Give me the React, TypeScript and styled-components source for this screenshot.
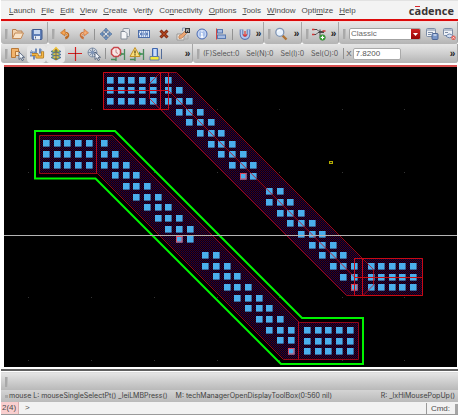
import React from "react";
import styled, { createGlobalStyle } from "styled-components";

const GlobalStyle = createGlobalStyle`
  * { box-sizing: border-box; }
  body {
    margin: 0;
    background: #fff;
    color: #4c4c4c;
    font-family: "Liberation Sans", Arial, sans-serif;
    font-size: 8px;
    line-height: 10px;
  }
  button, input, select { font: inherit; color: inherit; }
`;

const Window = styled.div`
  display: flex;
  flex-direction: column;
  padding-left: 1px;
  min-height: 100vh;
`;

const MenuBar = styled.nav`
  display: flex;
  align-items: center;
  gap: 6px;
  height: 19px;
  padding: 1px 4px 0 8px;
  background: #f3f3f3;
  border-top: 1px solid #e2e2e2;
`;

const MenuItem = styled.button`
  padding: 0;
  border: 0;
  background: none;
  white-space: nowrap;
`;

const Brand = styled.span`
  margin-left: auto;
  color: #3b3434;
  font: 700 11px/11px "Open Sans", sans-serif;
`;

const Accent = styled.span`
  position: relative;
  &::before {
    content: "";
    position: absolute;
    left: 1px;
    top: 3px;
    width: 5px;
    height: 1px;
    background: #d8232a;
  }
`;

const RedRule = styled.div`
  height: 3px;
  background: #dc0a0a;
  border-bottom: 1px solid #f4dcdc;
`;

const ToolRow = styled.div<{ $h: number; $top?: number }>`
  display: flex;
  height: ${(p) => p.$h}px;
  > div { padding-top: ${(p) => p.$top ?? 0}px; }
`;

const Group = styled.div<{ $grow?: boolean; $w?: number }>`
  display: flex;
  align-items: center;
  flex: ${(p) => (p.$grow ? "1 1 0" : "none")};
  width: ${(p) => (p.$w ? `${p.$w}px` : "auto")};
  min-width: 0;
  padding-left: 4px;
  overflow: hidden;
  border-right: 1px solid #a6a6a6;
  border-radius: 0 0 3px 3px;
  background: linear-gradient(#e6e6e6, #cfcfcf 50%, #b4b4b4);
`;

const Handle = styled.span`
  flex: none;
  width: 3px;
  height: 10px;
  background: #a9a9a9;
  border-right: 1px solid #bcbcbc;
`;

const Divider = styled.span<{ $before?: number; $after?: number }>`
  flex: none;
  width: 1px;
  height: 11px;
  margin: 0 ${(p) => p.$after ?? 1}px 0 ${(p) => p.$before ?? 1}px;
  background: #929292;
`;

const IconButton = styled.button<{ $on?: boolean; $w?: number }>`
  display: flex;
  flex: none;
  align-items: center;
  justify-content: center;
  width: ${(p) => p.$w ?? 19}px;
  height: 18px;
  padding: 0;
  border: 0;
  border-radius: 4px;
  background: ${(p) => (p.$on ? "#e6e6e6" : "none")};
  svg { display: block; flex: none; }
`;

const More = styled.button`
  flex: none;
  margin-left: auto;
  width: 9px;
  padding: 0;
  border: 0;
  background: none;
  color: #1c1c1c;
  font: 700 10px/10px "Liberation Sans", sans-serif;
`;

const Combo = styled.label`
  display: flex;
  flex: none;
  width: 72px;
  height: 12px;
  margin: 0 1px 0 3px;
  border-radius: 2px;
  border: 1px solid #a3a3a3;
  background: #fff;
  overflow: hidden;
`;

const ComboSelect = styled.select`
  appearance: none;
  flex: 1;
  min-width: 0;
  padding: 0 1px;
  border: 0;
  background: none;
  color: #6a6a6a;
`;

const ComboArrow = styled.span`
  display: flex;
  align-items: center;
  justify-content: center;
  width: 9px;
  background: linear-gradient(#d02020, #960404);
`;

const Readout = styled.span`
  flex: none;
  margin: 0 0 0 3px;
  color: #555;
  font-family: Inter, sans-serif;
  font-size: 7px;
  & + & { margin-left: 7px; }
`;

const Coord = styled.label`
  display: flex;
  flex: none;
  align-items: center;
  gap: 1px;
  color: #555;
`;

const CoordInput = styled.input`
  width: 48px;
  height: 12px;
  padding: 0 2px;
  border: 1px solid #aaa;
  border-radius: 2px;
  background: #fff;
`;

const Canvas = styled.main`
  margin: 2px 1px 0 3px;
  border-top: 2px solid #d85050;
  background: #000;
  overflow: hidden;
  svg { display: block; }
`;

const Splitter = styled.div`
  height: 4px;
  margin-top: 2px;
  border-top: 2px solid #5f5f5f;
  border-bottom: 1px solid #ddd;
`;

const Dock = styled.div`
  display: flex;
  align-items: center;
  height: 17px;
  padding-left: 4px;
  background: linear-gradient(#e4e4e4, #b9b9b9);
`;

const Hints = styled.div`
  display: flex;
  align-items: center;
  height: 12px;
  padding: 0 3px 0 4px;
  background: linear-gradient(#d4d4d4, #bababa);
  color: #404040;
  font-family: Inter, sans-serif;
  font-size: 7px;
  white-space: nowrap;
`;

const Grip = styled.span`
  width: 3px;
  height: 3px;
  margin-right: 1px;
  background: #aaa;
`;

const Hint = styled.span<{ $right?: boolean }>`
  margin-right: 8px;
  ${(p) => p.$right && "margin: 0 0 0 auto;"}
`;

const Prompt = styled.form`
  display: flex;
  align-items: stretch;
  height: 13px;
  background: #f2f2f2;
  border-bottom: 1px solid #9a9a9a;
  line-height: 12px;
`;

const Count = styled.span`
  width: 18px;
  padding-left: 1px;
  background: #f9cfcf;
  border-right: 1px solid #d9b0b0;
`;

const PromptLabel = styled.label`
  display: flex;
  flex: 1;
  padding-left: 6px;
  gap: 4px;
`;

const PromptInput = styled.input`
  flex: 1;
  min-width: 0;
  padding: 0;
  border: 0;
  background: none;
`;

const Cmd = styled.span`
  margin: 1px 0 0;
  padding: 0 5px 0 4px;
  border-left: 1px solid #999;
  line-height: 11px;
`;

const Corner = styled.span`
  width: 3px;
  margin-top: 2px;
  background: #a5a5a5;
`;

const Glyph = ({ children }: { children: React.ReactNode }) => (
  <svg width="16" height="16" viewBox="0 0 16 16" fill="none" aria-hidden="true">
    {children}
  </svg>
);

const Cursor = ({ x, y }: { x: number; y: number }) => (
  <path
    transform={`translate(${x} ${y})`}
    d="M0 0v7.5l1.8-1.6 1.4 2.8 1.3-.7-1.4-2.7H5.500z"
    fill="#eef2f8"
    stroke="#43546e"
    strokeWidth=".8"
  />
);

const icons: Record<string, React.ReactNode> = {
  open: (
    <>
      <path d="M2.500 12.500v-9h3.500l1 1.500h5v2" fill="#f3d3ae" stroke="#b98252" />
      <path d="M2.500 12.500 5 7h8.500l-2.500 5.500z" fill="#f9e3c8" stroke="#c48b58" />
    </>
  ),
  save: (
    <>
      <rect x="3" y="3.500" width="10" height="10" rx="1" fill="#5f7fb8" stroke="#3e588c" />
      <rect x="5" y="4" width="6" height="4" fill="#c9d8ef" />
      <rect x="5" y="10" width="6" height="3.500" fill="#e9edf5" />
      <path d="M6.500 10.500v2" stroke="#56647e" />
    </>
  ),
  undo: (
    <>
      <path d="M5.500 7h3.200q2.800.4 2.200 3-.5 1.700-2.600 2.200" stroke="#bb6a24" strokeWidth="2.600" />
      <path d="M3.500 6.800 8 3v7z" fill="#ef9a48" stroke="#bb6a24" strokeWidth=".6" />
      <path d="M6 7h2.700q2.100.3 1.700 2.600" stroke="#f8b66d" />
    </>
  ),
  redo: (
    <>
      <path d="M10.500 7H7.300q-2.800.4-2.200 3 .5 1.700 2.600 2.200" stroke="#c9713b" strokeWidth="2.600" />
      <path d="M12.500 6.800 8 3v7z" fill="#f1a266" stroke="#c9713b" strokeWidth=".6" />
      <path d="M10 7H7.300q-2.100.3-1.700 2.600" stroke="#f7bf90" />
    </>
  ),
  move: (
    <>
      <path d="M8 4v8M4 8h8" stroke="#5f7da6" strokeWidth="1.600" />
      <path d="m8 2 2.500 3h-5zM8 14l2.500-3h-5zM2 8l3-2.500v5zM14 8l-3-2.500v5z" fill="#6f96c6" stroke="#4b6890" strokeWidth=".6" />
      <rect x="7" y="7" width="2" height="2" fill="#d8e3f0" />
    </>
  ),
  copy: (
    <>
      <rect x="6" y="2.500" width="6.500" height="8" rx="1" fill="#e6e9ed" stroke="#8b949f" />
      <path d="M4 5.500h4l2 2v5.500H4z" fill="#f4f5f7" stroke="#858e99" />
    </>
  ),
  stretch: (
    <>
      <rect x="2.500" y="4.500" width="11" height="7" fill="#dce7f8" stroke="#4c6da8" />
      <path d="M3 6h10M3 10h10" stroke="#4c6da8" strokeDasharray="1 1" />
      <path d="M4 8h8M6 6.500 4.500 8 6 9.500M10 6.500 11.500 8 10 9.500" stroke="#3c62a8" />
    </>
  ),
  remove: (
    <>
      <path d="m4.500 4.500 7 7M11.500 4.500l-7 7" stroke="#7b2712" strokeWidth="3" />
      <path d="m4.800 4.800 6.400 6.400M11.200 4.800l-6.400 6.400" stroke="#b5481f" strokeWidth="1.200" />
    </>
  ),
  properties: (
    <>
      <path d="M2 8h7v6H2z" fill="#f1ebe4" stroke="#999" />
      <path d="M4 12.500q-1-3.500 2.500-4L10 5l2 2-3.500 3.500q-1.500 2.500-4.500 2z" fill="#eaa675" stroke="#b87344" strokeWidth=".7" />
      <path d="M7.500 5V2h3" stroke="#8ca0c0" />
      <rect x="10" y="2" width="5" height="5" fill="#373737" />
      <path d="M11.500 6V3.500h2v1h-1L14 6" stroke="#dedede" strokeWidth=".7" />
      <path d="M10 13h3V9" stroke="#aaa" />
    </>
  ),
  info: (
    <>
      <circle cx="8" cy="8" r="5" fill="#a9c0eb" stroke="#4d6db4" />
      <circle cx="8" cy="8" r="3.800" stroke="#dbe5f8" strokeWidth=".7" />
      <path d="M8 7v4M7 7.500h1M6.800 11h2.500M8 4.500v1.300" stroke="#fff" strokeWidth="1.300" />
    </>
  ),
  align: (
    <>
      <path d="M3.500 2.500v11" stroke="#d24545" />
      <rect x="4.500" y="3.500" width="5" height="3.500" fill="#a7bce2" stroke="#5878b0" />
      <rect x="4.500" y="9" width="8" height="3.500" fill="#a7bce2" stroke="#5878b0" />
    </>
  ),
  magnet: (
    <>
      <path d="M4.500 3.500v5Q5 12 8 12.200q3-.2 3.500-3.700v-5" stroke="#5874b2" strokeWidth="3.600" />
      <path d="M4.500 3.500v5Q5 11.700 8 11.800q3-.1 3.500-3.300v-5" stroke="#b5c9ef" strokeWidth="1.700" />
      <path d="M8 5v5M6 8.500l2 1.800 2-1.800" stroke="#df3b3b" strokeWidth="1.200" />
    </>
  ),
  zoom: (
    <>
      <path d="m9.500 9.500 4 4" stroke="#b07333" strokeWidth="2.400" />
      <circle cx="6.800" cy="6.300" r="4" fill="#e8f2fd" stroke="#8095b4" strokeWidth="1.300" />
      <path d="M4.500 6q.5-2 2.500-2" stroke="#fff" />
    </>
  ),
  netlist: (
    <>
      <path d="M2 3.500h4l2 2h5M2 8.500h3l2-2h6M9 3.500v7" stroke="#494949" />
      <path d="M1 3.500h2.500M1 8.500h2.500M11.500 5h3" stroke="#d33939" strokeWidth="1.600" />
      <circle cx="11.500" cy="11.500" r="2.800" fill="#40a63d" stroke="#267d27" strokeWidth=".6" />
      <path d="M9.800 11.500h3.400M11.500 9.800v3.400" stroke="#fff" strokeWidth="1.100" />
    </>
  ),
  saveView: (
    <>
      <rect x="2.500" y="2.500" width="9" height="8" rx="1" fill="#eef1f6" stroke="#7d8da6" />
      <path d="M3 4h8M4 6.500h5M4 8.500h3" stroke="#7d8da6" />
      <rect x="8" y="7.500" width="6" height="6" rx="1" fill="#7996c8" stroke="#4d6696" />
      <path d="M9.500 9h3" stroke="#fff" />
    </>
  ),
  dropView: (
    <>
      <rect x="1.500" y="2.500" width="9" height="7" rx="1" fill="#eef1f6" stroke="#7d8da6" />
      <path d="M2 4h8M3 6.500h3" stroke="#7d8da6" />
      <path d="M4 10q3.500-4 7 0-3.500 3.500-7 0z" fill="#d5e1f3" stroke="#6b82a8" />
      <circle cx="11.500" cy="11.700" r="2.200" fill="#e05a50" />
      <path d="m10.500 10.700 2 2m0-2-2 2" stroke="#fff" strokeWidth=".7" />
    </>
  ),
  select: (
    <>
      <path d="M1.500 2.500h7v3h-3v6h-4z" fill="#f2b46c" stroke="#b97939" />
      <path d="M5.500 5.500h4v4h-4z" fill="#fde2bd" stroke="#b97939" />
      <Cursor x={9} y={6} />
    </>
  ),
  route: (
    <>
      <path d="M1 6.500h6v-4M1 9.500h4v4M11 2.500v4h4" stroke="#718bb8" strokeWidth="2" />
      <path d="m2 4 4 4M12 3l2 4" stroke="#8ba5ca" />
      <path d="M3 8.500h5V11h5.500V5.500" stroke="#aa741f" strokeWidth="3.200" strokeLinejoin="round" />
      <path d="M3 8.500h5V11h5.500V5.500" stroke="#f3b748" strokeWidth="1.700" strokeLinejoin="round" />
    </>
  ),
  layers: (
    <>
      <path d="M3 5.500 8 3l5 2.500L8 8zM3 8.500 8 6l5 2.500L8 11zM3 11.500 8 9l5 2.500L8 14z" fill="#8cad52" stroke="#42689a" strokeWidth=".8" />
      <path d="M8 2v12" stroke="#9b7b20" strokeWidth="2.200" />
      <path d="m5 5 3-3.500L11 5M5.500 8h5M5.500 11h5" stroke="#efc440" strokeWidth="1.300" />
      <path d="M8 4v9" stroke="#466ca0" strokeWidth=".8" />
    </>
  ),
  cross: (
    <>
      <path d="M8.500 1v14M1 7.500h14" stroke="#d42020" strokeWidth="1.200" />
      <path d="M8 7h1v1H8z" fill="#333" />
    </>
  ),
  probe: (
    <>
      <circle cx="6.500" cy="6.500" r="4.500" fill="#ccd3dd" stroke="#8090a6" />
      <path d="M2 6.500h9M6.500 2v9M3.500 3.500l6 6M9.500 3.500l-6 6" stroke="#71839b" strokeWidth=".8" />
      <circle cx="6.500" cy="6.500" r="2" fill="#8196b7" />
      <Cursor x={9} y={6} />
    </>
  ),
  stop: (
    <>
      <path d="M6 11v4M1 13.500h5M9 8h5M14.500 3v11" stroke="#4a8a5b" strokeWidth="1.300" />
      <path d="M10 5.500v5L13 8z" fill="#3d9a57" />
      <path d="M4 1.500h4L10.500 4v4L8 10.500H4L1.500 8V4z" fill="#f8e7e7" stroke="#c7474b" strokeWidth="1.500" />
      <path d="M6 3.500v3l2 1" stroke="#b76b6b" strokeWidth=".8" />
    </>
  ),
  warn: (
    <>
      <path d="M6 11v4M1 13.500h5M9 8h5M14.500 3v11" stroke="#4a8a5b" strokeWidth="1.300" />
      <path d="M10 5.500v5L13 8z" fill="#3d9a57" />
      <path d="m6 1.500 5 9H1z" fill="#f8df79" stroke="#c39127" strokeLinejoin="round" />
      <path d="M6 4.500v3M6 8.300v1.200" stroke="#5a4312" strokeWidth="1.300" />
    </>
  ),
  highlight: (
    <>
      <path d="M4.500 2.500h5v8h-5z" fill="#9dbcf0" stroke="#4066ac" />
      <path d="M7 3v7" stroke="#fff" />
      <path d="M2 10.500h9V14H2z" fill="#f5e83c" stroke="#4f6fa8" strokeWidth=".8" />
      <path d="M13.500 3v10" stroke="#536c99" />
    </>
  ),
};

const Tool = ({ name, label, on, w }: { name: string; label: string; on?: boolean; w?: number }) => (
  <IconButton type="button" aria-label={label} aria-pressed={on} $on={on} $w={w}>
    <Glyph>{icons[name]}</Glyph>
  </IconButton>
);

const menus: [string, number][] = [
  ["Launch", 0], ["File", 0], ["Edit", 0], ["View", 0], ["Create", 0], ["Verify", 4],
  ["Connectivity", 2], ["Options", 0], ["Tools", 0], ["Window", 0], ["Optimize", 4], ["Help", 0],
];

type Cut = { x: number; y: number; hot?: boolean };
const PITCH = 10.65;

const block = (x: number, y: number): Cut[] =>
  Array.from({ length: 15 }, (_, i) => ({ x: x + (i % 5) * PITCH, y: y + Math.floor(i / 5) * PITCH }));

const stair = (x: number, y: number, lead: number, hotCol: number): Cut[] => {
  const cuts: Cut[] = [];
  for (let r = 0; r < 10; r++) {
    for (let c = Math.max(0, r - 2 + lead); c <= Math.min(8, r + lead); c++) {
      cuts.push({ x: x + c * PITCH, y: y + r * PITCH, hot: r === 9 && c === hotCol });
    }
  }
  return cuts;
};

const cuts: Cut[] = [
  ...block(110.4, 80.3),
  ...stair(168.5, 80.3, 0, 7),
  ...stair(269.4, 191.8, 1, 8),
  ...block(371, 266.6),
  ...block(46.6, 143.8),
  ...stair(104.9, 143.8, 0, 7),
  ...stair(205.9, 255.5, 1, 8),
  ...block(307.5, 330.5),
];

const Layout = () => (
  <svg width="454" height="300" viewBox="4 67 454 300" role="img" aria-label="Layout view">
    <defs>
      <pattern id="metal" width="2" height="2" patternUnits="userSpaceOnUse">
        <rect width="2" height="2" fill="#0c0010" />
        <rect width="1" height="1" fill="#3a001c" />
        <rect x="1" y="1" width="1" height="1" fill="#260044" />
      </pattern>
      <pattern id="cut" width="2" height="2" patternUnits="userSpaceOnUse">
        <rect width="2" height="2" fill="#3cb2f2" />
        <rect width="1" height="1" fill="#5ea8e2" />
        <rect x="1" y="1" width="1" height="1" fill="#54b0ea" />
      </pattern>
    </defs>
    {[109, 172, 297, 360].map((y) =>
      [28, 91, 154, 217, 279, 342, 404].map((x) => (
        <rect key={`${x}-${y}`} x={x} y={y} width="1" height="1" fill="#343434" />
      )),
    )}
    <g fill="url(#metal)" stroke="#960818">
      <path d="M103.500 72.500h73l186 186h60v37h-76l-186-186h-57z" />
      <path d="M39.500 135.500h73l187 187h59v37h-75l-186-186h-58z" />
    </g>
    <path
      d="M35 131h80l187 187h61v46h-82L95.500 178.500H35z"
      fill="none"
      stroke="#00f400"
      strokeWidth="2"
    />
    {cuts.map((c, i) => (
      <React.Fragment key={i}>
        <rect x={Math.round(c.x - 3.5)} y={Math.round(c.y - 3.5)} width="6.600" height="6.600" fill="url(#cut)" />
        {c.hot && (
          <rect x={Math.round(c.x - 3.5) + 0.5} y={Math.round(c.y - 3.5) + 0.5} width="5.500" height="5.500" fill="none" stroke="#d84860" />
        )}
      </React.Fragment>
    ))}
    <g fill="none" stroke="#c80a14">
      <path d="M103.500 90.500h65M160.500 72v37.500M103.500 72.500h65v37h-65z" />
      <path d="M354.500 258v38M362.500 258v38M354.500 277.500h68M354.500 258.500h68v37h-68z" />
      <path d="M96.500 136v37.500M298.500 322v37.500" stroke="#b00a18" />
      <path d="M168.500 90.500 354.500 277" strokeOpacity=".8" />
      <path d="m160.500 72.500-11 11v15l11 11M362.500 258.500l11 11v15.500l-11 11" strokeOpacity=".75" />
    </g>
    <path d="M4 235.500h454" stroke="#b4b4b4" />
    <rect x="329.500" y="161.500" width="3" height="2" fill="#221" stroke="#b4ac00" />
  </svg>
);

export default function App() {
  return (
    <Window>
      <GlobalStyle />
      <MenuBar>
        {menus.map(([name, k]) => (
          <MenuItem key={name} type="button">
            {name.slice(0, k)}
            <u>{name[k]}</u>
            {name.slice(k + 1)}
          </MenuItem>
        ))}
        <Brand>
          c<Accent>a</Accent>dence
        </Brand>
      </MenuBar>
      <RedRule />
      <ToolRow $h={22} $top={2}>
        <Group $w={47}>
          <Handle />
          <Tool name="open" label="Open" />
          <Tool name="save" label="Save" />
        </Group>
        <Group $w={216}>
          <Handle />
          <Tool name="undo" label="Undo" />
          <Tool name="redo" label="Redo" />
          <Divider />
          <Tool name="move" label="Move" />
          <Tool name="copy" label="Copy" />
          <Tool name="stretch" label="Stretch" w={20} />
          <Tool name="remove" label="Delete" />
          <Tool name="properties" label="Edit properties" />
          <Tool name="info" label="Info" />
          <Tool name="align" label="Align" />
          <Divider $before={2} $after={2} />
          <Tool name="magnet" label="Snap" />
          <More type="button">»</More>
        </Group>
        <Group $w={38}>
          <Handle />
          <Tool name="zoom" label="Zoom" />
          <More type="button">»</More>
        </Group>
        <Group $w={37}>
          <Handle />
          <Tool name="netlist" label="Add net" />
          <More type="button">»</More>
        </Group>
        <Group $grow>
          <Handle />
          <Combo>
            <ComboSelect aria-label="Workspace" defaultValue="Classic">
              <option>Classic</option>
            </ComboSelect>
            <ComboArrow>
              <svg width="5" height="3" viewBox="0 0 5 3" aria-hidden="true">
                <path d="M0 0h5L2.500 3z" fill="#fff" />
              </svg>
            </ComboArrow>
          </Combo>
          <Tool name="saveView" label="Save workspace" />
          <Tool name="dropView" label="Delete workspace" w={18} />
        </Group>
      </ToolRow>
      <ToolRow $h={19}>
        <Group $w={192}>
          <Handle />
          <Tool name="select" label="Select" />
          <Tool name="route" label="Route" on />
          <Tool name="layers" label="Layers" on />
          <Tool name="cross" label="Crosshair" />
          <Tool name="probe" label="Probe" />
          <Divider $before={2} $after={2} />
          <Tool name="stop" label="Stop on violation" />
          <Tool name="warn" label="Warn on violation" />
          <Tool name="highlight" label="Highlight" />
          <More type="button">»</More>
        </Group>
        <Group $grow>
          <Handle />
          <Readout>(F)Select:0</Readout>
          <Readout>Sel(N):0</Readout>
          <Readout>Sel(I):0</Readout>
          <Readout>Sel(O):0</Readout>
          <Divider $before={5} $after={2} />
          <Coord>
            X
            <CoordInput defaultValue="7.8200" />
          </Coord>
          <More type="button">»</More>
        </Group>
      </ToolRow>
      <Canvas>
        <Layout />
      </Canvas>
      <Splitter />
      <Dock>
        <Handle />
      </Dock>
      <Hints>
        <Grip />
        <Hint>mouse L: mouseSingleSelectPt() _leiLMBPress()</Hint>
        <Hint>M: techManagerOpenDisplayToolBox(0:560 nil)</Hint>
        <Hint $right>R: _lxHiMousePopUp()</Hint>
      </Hints>
      <Prompt>
        <Count>2(4)</Count>
        <PromptLabel>
          &gt;
          <PromptInput />
        </PromptLabel>
        <Cmd>Cmd:</Cmd>
        <Corner />
      </Prompt>
    </Window>
  );
}
